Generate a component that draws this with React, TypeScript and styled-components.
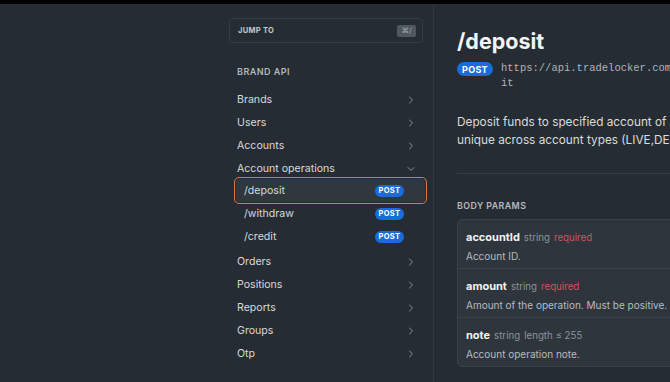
import React from "react";
import styled, { createGlobalStyle } from "styled-components";

const Global = createGlobalStyle`
  html, body { margin: 0; padding: 0; }
  body {
    background: #262c33;
    overflow: hidden;
    font-family: Inter, "Noto Sans", "Liberation Sans", sans-serif;
    -webkit-font-smoothing: antialiased;
  }
`;

const Page = styled.div`
  width: 670px;
  height: 382px;
  overflow: hidden;
  display: flex;
  flex-direction: column;
  background: #262c33;
`;

const TopBar = styled.div`
  height: 4px;
  flex: 0 0 4px;
  background: #000;
`;

const Columns = styled.div`
  flex: 1;
  display: flex;
  min-height: 0;
`;

const Gutter = styled.div`
  flex: 0 0 222px;
`;

const Sidebar = styled.nav`
  flex: 0 0 212px;
  box-sizing: border-box;
  border-right: 1px solid #31383f;
  padding: 14px 10px 0 7px;
  display: flex;
  flex-direction: column;
`;

const JumpBox = styled.div`
  height: 25px;
  width: 194px;
  box-sizing: border-box;
  border: 1px solid #353c44;
  border-radius: 4px;
  display: flex;
  align-items: center;
  justify-content: space-between;
  padding: 0 6px 0 8px;
`;

const JumpLabel = styled.span`
  font-size: 7.5px;
  font-weight: 700;
  letter-spacing: 0.3px;
  color: #c3c7cb;
`;

const Kbd = styled.span`
  width: 19px;
  height: 12px;
  border-radius: 2px;
  background: #4f575f;
  color: #a3a9ae;
  font-size: 7.5px;
  display: flex;
  align-items: center;
  justify-content: center;
`;

const SectionTitle = styled.div`
  margin: 23px 0 10px 8px;
  font-size: 9px;
  font-weight: 600;
  letter-spacing: 0.45px;
  color: #b3b8bd;
  line-height: 12px;
`;

const NavRow = styled.div`
  height: 23px;
  display: flex;
  align-items: center;
  justify-content: space-between;
  padding: 0 8px 0 8px;
  font-size: 10.6px;
  color: #d6d9dc;
`;

const SubList = styled.div`
  display: flex;
  flex-direction: column;
  margin: -1px -2px 2px 7px;
`;

const SubRow = styled.div<{ $active?: boolean }>`
  height: 23px;
  display: flex;
  align-items: center;
  justify-content: space-between;
  padding: 0 21px 0 8px;
  font-size: 10.6px;
  color: #d6d9dc;
  border-radius: 3px;
  background: ${(p) => (p.$active ? "#30373e" : "transparent")};
  outline: ${(p) => (p.$active ? "1.5px solid #e8733c" : "none")};
  outline-offset: 1px;
`;

const Badge = styled.span<{ $big?: boolean }>`
  display: inline-flex;
  align-items: center;
  justify-content: center;
  flex: 0 0 auto;
  background: #186cdb;
  color: #fff;
  font-weight: 700;
  border-radius: 8px;
  letter-spacing: 0.3px;
  width: ${(p) => (p.$big ? "36px" : "29px")};
  height: ${(p) => (p.$big ? "14px" : "12px")};
  font-size: ${(p) => (p.$big ? "9px" : "7.5px")};
`;

const Chevron = ({ down }: { down?: boolean }) => (
  <svg width="8" height="8" viewBox="0 0 8 8" fill="none">
    {down ? (
      <path d="M1 2.5 L4 5.5 L7 2.5" stroke="#8a9096" strokeWidth="1" strokeLinecap="round" strokeLinejoin="round" />
    ) : (
      <path d="M2.5 1 L5.5 4 L2.5 7" stroke="#8a9096" strokeWidth="1" strokeLinecap="round" strokeLinejoin="round" />
    )}
  </svg>
);

const Main = styled.main`
  flex: 0 0 auto;
  width: 370px;
  padding: 23px 0 0 23px;
`;

const Title = styled.h1`
  margin: 0;
  font-size: 21.5px;
  line-height: 28px;
  font-weight: 700;
  color: #f2f4f5;
`;

const EndpointLine = styled.div`
  margin-top: 7px;
  display: flex;
  align-items: flex-start;
  gap: 8px;
`;

const Url = styled.span`
  flex: 0 0 auto;
  font-family: "Liberation Mono", "DejaVu Sans Mono", monospace;
  font-size: 10.5px;
  line-height: 15px;
  color: #aeb4b9;
  word-break: break-all;
  width: 59ch;
  margin-top: -1px;
`;

const Description = styled.p`
  margin: 22px 0 0 0;
  font-size: 11.8px;
  line-height: 18px;
  color: #d9dcde;
`;

const Divider = styled.div`
  margin-top: 24px;
  height: 1px;
  background: #363d44;
`;

const ParamsTitle = styled.div`
  margin-top: 26px;
  font-size: 8.8px;
  font-weight: 600;
  letter-spacing: 0.45px;
  line-height: 12px;
  color: #b6bbc0;
`;

const Card = styled.div`
  margin-top: 7px;
  border: 1px solid #3a4148;
  border-radius: 5px;
  background: #2e353c;
  display: flex;
  flex-direction: column;
`;

const ParamRow = styled.div`
  height: 49px;
  box-sizing: border-box;
  padding: 9px 8px 0 8px;
  border-top: 1px solid #3b4249;
  &:first-child {
    border-top: none;
    height: 48px;
  }
`;

const ParamHead = styled.div`
  display: flex;
  align-items: baseline;
  gap: 4px;
  line-height: 16px;
`;

const ParamName = styled.span`
  font-size: 11px;
  font-weight: 700;
  color: #f1f3f4;
`;

const ParamMeta = styled.span<{ $tone?: "red" }>`
  font-size: 9.7px;
  color: ${(p) => (p.$tone === "red" ? "#d2525f" : "#8d949a")};
`;

const ParamDesc = styled.div`
  margin-top: 3px;
  font-size: 10px;
  line-height: 14px;
  color: #b7bcc1;
`;

const groups = ["Brands", "Users", "Accounts"];
const after = ["Orders", "Positions", "Reports", "Groups", "Otp"];
const subs = ["/deposit", "/withdraw", "/credit"];

export default function App() {
  return (
    <Page>
      <Global />
      <TopBar />
      <Columns>
        <Gutter />
        <Sidebar>
          <JumpBox>
            <JumpLabel>JUMP TO</JumpLabel>
            <Kbd>⌘/</Kbd>
          </JumpBox>
          <SectionTitle>BRAND API</SectionTitle>
          {groups.map((g) => (
            <NavRow key={g}>
              {g}
              <Chevron />
            </NavRow>
          ))}
          <NavRow>
            Account operations
            <Chevron down />
          </NavRow>
          <SubList>
            {subs.map((s, i) => (
              <SubRow key={s} $active={i === 0}>
                {s}
                <Badge>POST</Badge>
              </SubRow>
            ))}
          </SubList>
          {after.map((g) => (
            <NavRow key={g}>
              {g}
              <Chevron />
            </NavRow>
          ))}
        </Sidebar>
        <Main>
          <Title>/deposit</Title>
          <EndpointLine>
            <Badge $big>POST</Badge>
            <Url>https://api.tradelocker.com/brand/accounts/operations/deposit</Url>
          </EndpointLine>
          <Description>
            Deposit funds to specified account of a user. Account ID must be unique across account types (LIVE,DEMO).
          </Description>
          <Divider />
          <ParamsTitle>BODY PARAMS</ParamsTitle>
          <Card>
            <ParamRow>
              <ParamHead>
                <ParamName>accountId</ParamName>
                <ParamMeta>string</ParamMeta>
                <ParamMeta $tone="red">required</ParamMeta>
              </ParamHead>
              <ParamDesc>Account ID.</ParamDesc>
            </ParamRow>
            <ParamRow>
              <ParamHead>
                <ParamName>amount</ParamName>
                <ParamMeta>string</ParamMeta>
                <ParamMeta $tone="red">required</ParamMeta>
              </ParamHead>
              <ParamDesc>Amount of the operation. Must be positive.</ParamDesc>
            </ParamRow>
            <ParamRow>
              <ParamHead>
                <ParamName>note</ParamName>
                <ParamMeta>string</ParamMeta>
                <ParamMeta>length ≤ 255</ParamMeta>
              </ParamHead>
              <ParamDesc>Account operation note.</ParamDesc>
            </ParamRow>
          </Card>
        </Main>
      </Columns>
    </Page>
  );
}
